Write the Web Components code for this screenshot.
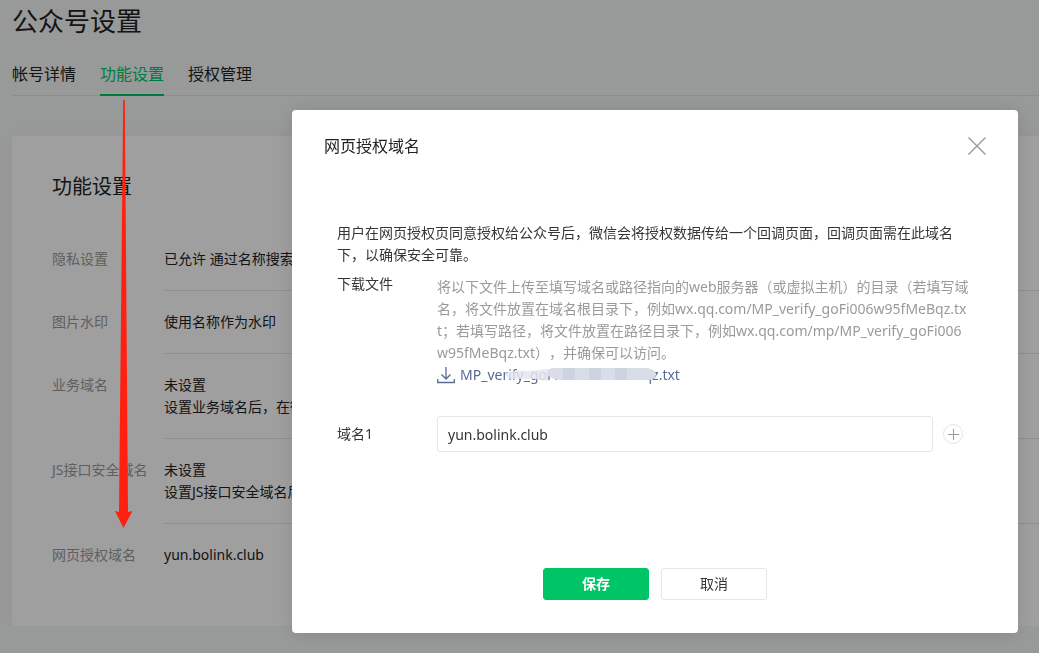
<!DOCTYPE html>
<html lang="zh-CN">
<head>
<meta charset="utf-8">
<title>公众号设置</title>
<style>
  html, body { margin: 0; min-height: 100%; }
  body {
    background: #f4f6f5;
    color: #222;
    font: 14px/22px "Noto Sans", "Noto Sans CJK SC", sans-serif;
    text-spacing-trim: space-all;
    overflow: hidden;
  }
</style>
</head>
<body>
<mp-page heading="公众号设置">
  <mp-tabs slot="tabs">
    <mp-tab>帐号详情</mp-tab>
    <mp-tab active>功能设置</mp-tab>
    <mp-tab>授权管理</mp-tab>
  </mp-tabs>
  <mp-card heading="功能设置">
    <mp-setting label="隐私设置">已允许 通过名称搜索</mp-setting>
    <mp-setting label="图片水印">使用名称作为水印</mp-setting>
    <mp-setting label="业务域名">未设置<br>设置业务域名后，在微</mp-setting>
    <mp-setting label="JS接口安全域名">未设置<br>设置JS接口安全域名后</mp-setting>
    <mp-setting label="网页授权域名" last>yun.bolink.club</mp-setting>
  </mp-card>
</mp-page>
<mp-dialog heading="网页授权域名">
  <mp-domain-form></mp-domain-form>
  <mp-button slot="actions" primary>保存</mp-button>
  <mp-button slot="actions">取消</mp-button>
</mp-dialog>
<mp-arrow></mp-arrow>

<script>
  const define = (name, render) => customElements.define(name, class extends HTMLElement {
    connectedCallback() {
      if (this.shadowRoot) return;
      this.attachShadow({ mode: "open" }).innerHTML = render(this);
    }
  });

  define("mp-page", el => `
    <style>
      :host { display: block; padding-left: 12px; }
      h1 { margin: 0; font-size: 26px; font-weight: 400; line-height: 42px; }
      main { padding-top: 40px; }
    </style>
    <h1>${el.getAttribute("heading")}</h1>
    <slot name="tabs"></slot>
    <main><slot></slot></main>`);

  define("mp-tabs", () => `
    <style>
      :host { display: block; padding-top: 12px; border-bottom: 1px solid #e0e2e1; }
      nav { display: flex; gap: 24px; }
    </style>
    <nav><slot></slot></nav>`);

  define("mp-tab", () => `
    <style>
      :host { display: block; margin-bottom: -1px; border-bottom: 2px solid transparent; }
      :host([active]) { border-color: #00c566; --tab: #00c566; }
      a { display: block; color: var(--tab, #222); font-size: 16px; line-height: 40px; text-decoration: none; }
    </style>
    <a href="#"><slot></slot></a>`);

  define("mp-card", el => `
    <style>
      :host { display: block; padding: 40px 0 40px 40px; background: #fff;
              border-radius: 4px 0 0 4px; box-shadow: 0 1px 20px rgba(0, 0, 0, .04); }
      h2 { margin: 0 0 30px; font-size: 20px; font-weight: 400; line-height: 22px; }
    </style>
    <h2>${el.getAttribute("heading")}</h2>
    <slot></slot>`);

  define("mp-setting", el => `
    <style>
      :host { display: flex; white-space: nowrap; }
      dt { flex: 0 0 112px; padding: 20px 0; color: #999; }
      dd { flex: 1; min-width: 0; margin: 0; padding: 20px 0; border-bottom: 1px solid #e4e4e4; overflow: hidden; }
      :host([last]) dd { border: 0; }
    </style>
    <dt>${el.getAttribute("label")}</dt>
    <dd><slot></slot></dd>`);

  define("mp-dialog", el => `
    <style>
      :host { position: fixed; inset: 0; display: block; padding: 110px 21px 20px 292px; background: rgba(0, 0, 0, .375); }
      section { background: #fff; border-radius: 4px; box-shadow: 0 1px 20px rgba(0, 0, 0, .12); }
      header { display: flex; align-items: center; justify-content: space-between; height: 72px; padding: 0 32px; }
      h3 { margin: 0; font-size: 16px; font-weight: 400; }
      button { display: flex; padding: 0; border: 0; background: none; }
      footer { display: flex; justify-content: center; gap: 12px; padding: 116px 0 33px; }
    </style>
    <section role="dialog" aria-label="${el.getAttribute("heading")}">
      <header>
        <h3>${el.getAttribute("heading")}</h3>
        <button type="button" aria-label="关闭">
          <svg width="18" height="18" fill="none" stroke="#9a9a9a" stroke-width="1.4"><path d="M.5.5l17 17M17.500.5l-17 17"/></svg>
        </button>
      </header>
      <slot></slot>
      <footer><slot name="actions"></slot></footer>
    </section>`);

  define("mp-domain-form", () => `
    <style>
      :host { display: block; padding: 40px 45px 0; color: #353535; }
      p { margin: 0; }
      .row { display: grid; grid-template-columns: 100px 1fr; }
      .files { margin-top: 7px; }
      .hint { padding: 3px 4px 0 0; color: #9a9a9a; word-break: break-all; }
      a { position: relative; display: inline-flex; align-items: center; gap: 5px; color: #576b95; text-decoration: none; vertical-align: top; }
      .smudge { position: absolute; left: 68px; top: 2px; }
      .domain { align-items: center; margin-top: 30px; }
      .field { display: flex; align-items: center; gap: 10px; padding-right: 10px; }
      input { flex: 1; min-width: 0; box-sizing: border-box; height: 36px; padding: 0 10px; border: 1px solid #e4e8eb;
              border-radius: 3px; font: inherit; color: #353535; background: #fff; outline: 0; }
      button { display: flex; padding: 0; border: 0; background: none; }
    </style>
    <p>用户在网页授权页同意授权给公众号后，微信会将授权数据传给一个回调页面，回调页面需在此域名下，以确保安全可靠。</p>
    <div class="row files">
      <span>下载文件</span>
      <div class="hint">
        <p>将以下文件上传至填写域名或路径指向的web服务器（或虚拟主机）的目录（若填写域名，将文件放置在域名根目录下，例如wx.qq.com/MP_verify_goFi006w95fMeBqz.txt；若填写路径，将文件放置在路径目录下，例如wx.qq.com/mp/MP_verify_goFi006w95fMeBqz.txt），并确保可以访问。</p>
        <a href="#">
          <svg width="18" height="18" fill="none" stroke="#576b95" stroke-width="1.3"><path d="M9 1v12M4.500 8.500L9 13l4.500-4.500M.7 13v3.500h16.600V13"/></svg>
          <span>MP_verify_goFi006w95fMeBqz.txt</span>
          <svg class="smudge" width="154" height="18">
            <path fill="#e3e6ed" fill-opacity=".85" d="M0 7Q6 4 20 5L43 3V15L30 13L6 13Q0 11 0 7Z"/>
            <path fill="#d9dde7" d="M48 2H143Q151 4 151 9Q150 14 142 14H56Q44 13 42 8Q42 3 48 2Z"/>
            <path fill="#cdd3e0" d="M58 2h12v12H58zM84 2h12v12H84zM110 2h12v12h-12z"/>
          </svg>
        </a>
      </div>
    </div>
    <div class="row domain">
      <label for="domain">域名1</label>
      <div class="field">
        <input id="domain" type="text" value="yun.bolink.club">
        <button type="button" aria-label="添加域名">
          <svg width="20" height="20" fill="none"><circle cx="10" cy="10" r="9.500" stroke="#e1e5e8"/><path d="M10.500 5v11M5 10.500h11" stroke="#9a9a9a"/></svg>
        </button>
      </div>
    </div>`);

  define("mp-button", () => `
    <style>
      :host { display: block; }
      button { box-sizing: border-box; width: 106px; height: 32px; padding: 0; border: 1px solid #e4e8eb; border-radius: 3px;
               background: #fff; color: #353535; font: inherit; }
      :host([primary]) button { border-color: #00c566; background: #00c566; color: #fff; }
      :host([primary]) { font-weight: 700; }
    </style>
    <button type="button"><slot></slot></button>`);

  define("mp-arrow", () => `
    <style>
      :host { position: absolute; left: 114px; top: 100px; pointer-events: none; }
      svg { display: block; }
    </style>
    <svg width="20" height="430" fill="#ff2010"><path d="M9.200 0H10.800L14 412 18.500 411 9.500 428 1 411 5 412Z"/></svg>`);
</script>
</body>
</html>
